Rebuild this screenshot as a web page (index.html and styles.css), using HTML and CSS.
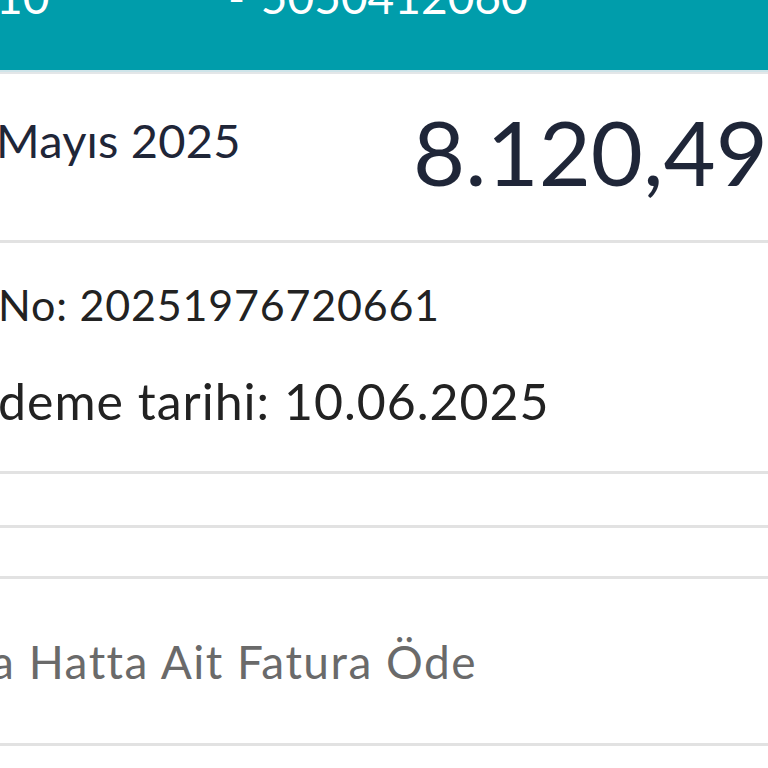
FILE: index.html
```html
<!DOCTYPE html>
<html lang="tr">
<head>
    <meta charset="UTF-8">
    <meta name="viewport" content="width=device-width, initial-scale=1.0">
    <title>Fatura Detayı</title>
    <link rel="stylesheet" href="styles.css">
</head>
<body>
    <header class="top-bar">
        <div class="top-line">
            <span class="line-id">10</span>
            <span class="line-no">- 5050412060</span>
        </div>
    </header>

    <section class="summary">
        <div class="period">Mayıs 2025</div>
        <div class="amount">8.120,49</div>
    </section>

    <section class="info">
        <div class="info-row invoice-no">No: 20251976720661</div>
        <div class="info-row due-date">deme tarihi: 10.06.2025</div>
    </section>

    <div class="blank-row"></div>
    <div class="blank-row short"></div>

    <section class="action">
        <span class="action-text">a Hatta Ait Fatura Öde</span>
    </section>
</body>
</html>
```

FILE: styles.css
```css
body {
    font-family: Lato, "Noto Sans", sans-serif;
    margin: 0;
    background: #fff;
    overflow: hidden;
    height: 768px;
}
.top-bar {
    height: 70px;
    background-color: #009dab;
    border-bottom: 2px solid #cfe4e9;
    box-shadow: 0 2px 0 #e3e6e8;
    overflow: hidden;
}
.top-line {
    display: flex;
    color: #fff;
    font-size: 46px;
    line-height: 46px;
    margin-top: -26px;
}
.line-id {
    margin-left: -4px;
    width: 232px;
}
.line-no {
    word-spacing: 4px;
}
.summary {
    display: flex;
    align-items: flex-start;
    height: 166px;
    margin-top: 2px;
    border-bottom: 3px solid #e2e2e2;
    color: #1f2638;
}
.period {
    font-size: 47px;
    margin-left: -4px;
    margin-top: 38px;
    width: 417px;
    letter-spacing: 0.2px;
}
.amount {
    font-size: 90px;
    margin-top: 23px;
    white-space: nowrap;
}
.info {
    height: 228px;
    border-bottom: 3px solid #e2e2e2;
    color: #222;
}
.info-row {
    white-space: nowrap;
    margin-left: -2px;
}
.invoice-no {
    font-size: 43px;
    padding-top: 36px;
    letter-spacing: 0.8px;
}
.due-date {
    font-size: 50px;
    padding-top: 41px;
    letter-spacing: 1px;
}
.blank-row {
    height: 51px;
    border-bottom: 3px solid #e2e2e2;
}
.blank-row.short {
    height: 48px;
}
.action {
    height: 164px;
    border-bottom: 3px solid #e2e2e2;
    display: flex;
    align-items: center;
    color: #6a6a6a;
    font-size: 46px;
}
.action-text {
    margin-left: -9px;
    letter-spacing: 1.5px;
}
```
